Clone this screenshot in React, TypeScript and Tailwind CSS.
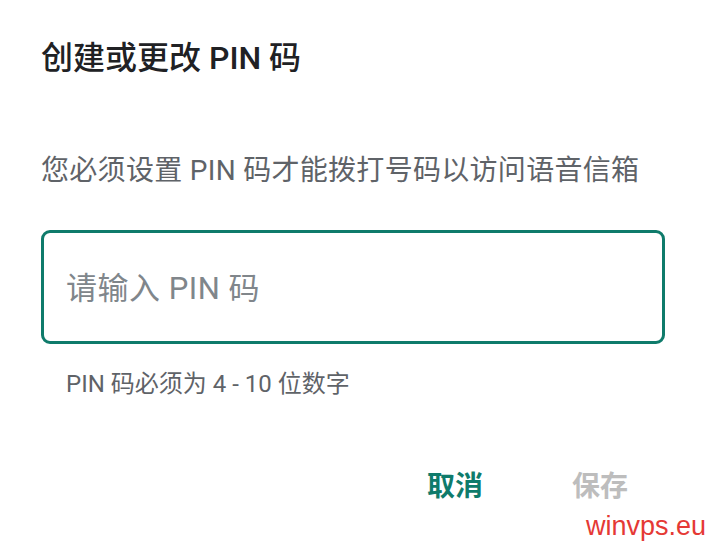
const font = "font-['Roboto','Noto_Sans_CJK_SC',sans-serif]"

export default function App() {
  return (
    <div className={`${font} flex h-[546px] w-[706px] flex-col bg-white`}>
      <div className="flex flex-col px-[41px] pt-[38px]">
        <h1 className="text-[32px] font-medium leading-[40px] text-[#202124]">
          创建或更改 PIN 码
        </h1>
        <p className="mt-[75px] text-[28px] leading-[36px] tracking-[0.3px] text-[#5f6368]">
          您必须设置 PIN 码才能拨打号码以访问语音信箱
        </p>
      </div>
      <div className="mt-[41px] px-[41px]">
        <div className="flex h-[114px] w-[624px] items-center rounded-[9px] border-[3px] border-[#0f7b6b] px-[22px] pt-[4px]">
          <span className="text-[31px] tracking-[0.5px] text-[#80868b]">请输入 PIN 码</span>
        </div>
        <p className="mt-[25px] pl-[25px] text-[24px] leading-[30px] text-[#5f6368]">
          PIN 码必须为 4 - 10 位数字
        </p>
      </div>
      <div className="mt-[71px] flex justify-end gap-[89px] pr-[78px]">
        <button className="text-[28px] leading-[34px] font-bold text-[#0f7b6b]">取消</button>
        <button className="text-[28px] leading-[34px] font-bold text-[#bdbdbd]">保存</button>
      </div>
      <div className="mt-[6px] flex justify-end">
        <span className="text-[27px] leading-[32px] text-[#e53935] font-['Liberation_Sans',sans-serif]">
          winvps.eu
        </span>
      </div>
    </div>
  )
}
